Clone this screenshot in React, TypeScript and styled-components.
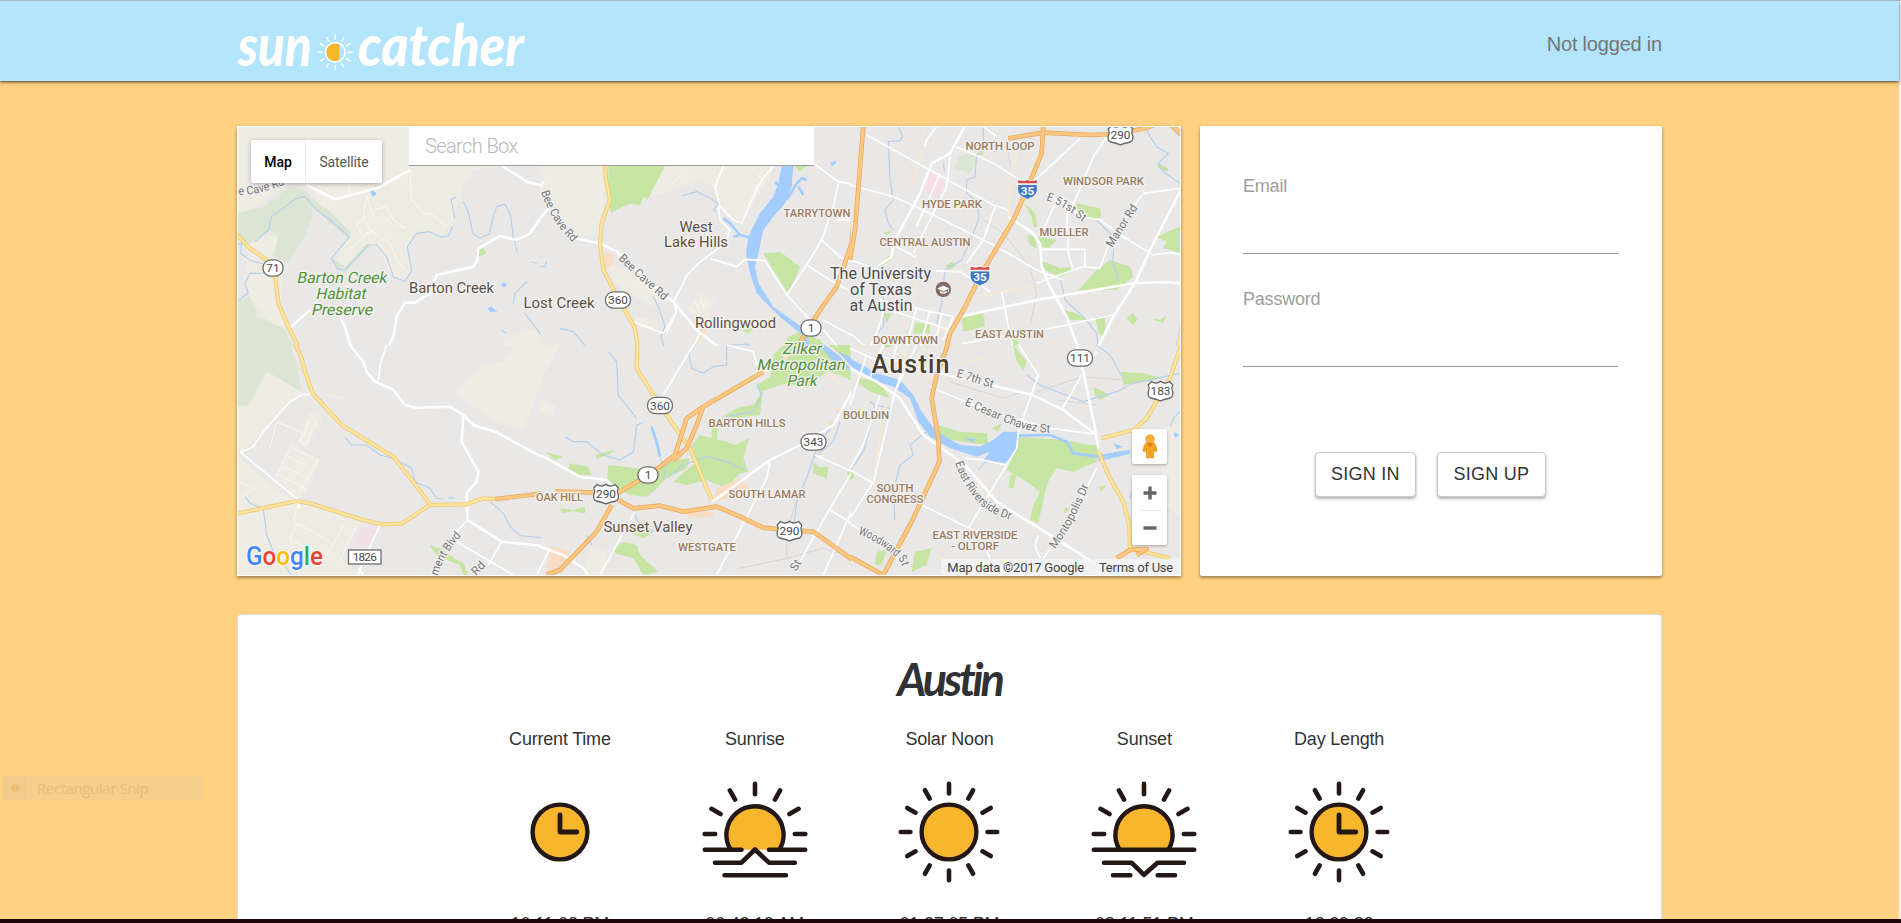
import React from "react";
import styled, { createGlobalStyle, css } from "styled-components";

const GlobalStyle = createGlobalStyle`
  *, *::before, *::after { box-sizing: border-box; }
  body {
    margin: 0;
    background: #ffd180;
    font-family: "Liberation Sans", Arial, sans-serif;
    overflow: hidden;
  }
`;

const SANS = `"Liberation Sans", Arial, sans-serif`;
const ROBOTO = `Roboto, "Liberation Sans", sans-serif`;

/* ---------- page frame ---------- */

const Frame = styled.div`
  position: relative;
  display: flex;
  flex-direction: column;
  height: 923px;
  overflow: hidden;
  border-top: 1px solid #a3b9c5;
  border-bottom: 4px solid #1e060b;
  background: #ffd180;
`;

const Page = styled.div`
  display: flex;
  flex-direction: column;
  flex: 1;
  min-height: 0;
  margin-right: 2px;
  box-shadow: 2px 0 0 #eceff3;
`;

const Container = styled.div`
  width: 1425px;
  margin-left: 237px;
`;

const Header = styled.header`
  flex: none;
  height: 80px;
  background: #b3e5fc;
  box-shadow: 0 1px 2px rgba(0, 0, 0, 0.55), 0 2px 5px rgba(0, 0, 0, 0.2);
`;

const HeaderInner = styled(Container)`
  display: flex;
  justify-content: space-between;
  height: 80px;
`;

const LogoSvg = styled.svg`
  display: block;
  width: 300px;
  height: 80px;
  overflow: visible;
`;

const LoginState = styled.span`
  line-height: 24px;
  padding-top: 31px;
  font-size: 20px;
  letter-spacing: -0.2px;
  color: #757575;
`;

const Main = styled(Container)`
  display: flex;
  flex-direction: column;
  gap: 38px;
  padding-top: 45px;
`;

const TopRow = styled.div`
  display: grid;
  grid-template-columns: 944px 462px;
  gap: 19px;
  height: 450px;
`;

const cardShadow = css`
  box-shadow: 0 2px 3px rgba(0, 0, 0, 0.3), 0 1px 4px rgba(0, 0, 0, 0.14);
`;

/* ---------- map ---------- */

const MapCard = styled.section`
  position: relative;
  border: 1px solid #fff;
  background: #e9e8e7;
  font-family: ${ROBOTO};
  ${cardShadow}
`;

const MapSvg = styled.svg`
  display: block;
  width: 942px;
  height: 448px;
  font-family: ${ROBOTO};
`;

const MapTypeSwitch = styled.div`
  position: absolute;
  left: 13px;
  top: 13px;
  display: flex;
  height: 43px;
  border-radius: 2px;
  background: #fff;
  box-shadow: 0 1px 4px rgba(0, 0, 0, 0.3);
`;

const MapTypeButton = styled.button<{ $active?: boolean; $width: number }>`
  width: ${(p) => p.$width}px;
  padding: 0;
  border: 0;
  border-left: ${(p) => (p.$active ? "0" : "1px solid #eeeeee")};
  background: transparent;
  font: ${(p) => (p.$active ? 500 : 400)} 14px ${ROBOTO};
  letter-spacing: -0.1px;
  color: ${(p) => (p.$active ? "#000" : "#565656")};
`;

const SearchInput = styled.input`
  position: absolute;
  left: 171px;
  top: -1px;
  width: 405px;
  height: 40px;
  padding: 1px 16px 0;
  border: 0;
  border-bottom: 1px solid #9e9e9e;
  background: #fff;
  font: 300 20px ${ROBOTO};
  letter-spacing: -0.6px;
  &::placeholder { color: #b9b9b9; opacity: 1; }
`;

const ControlStack = styled.div`
  position: absolute;
  right: 13px;
  top: 302px;
  display: flex;
  flex-direction: column;
  gap: 11px;
`;

const ControlBox = styled.div`
  display: flex;
  flex-direction: column;
  align-items: center;
  width: 35px;
  border-radius: 2px;
  background: #fff;
  box-shadow: 0 1px 3px rgba(0, 0, 0, 0.3);
`;

const ControlCell = styled.div`
  display: flex;
  align-items: center;
  justify-content: center;
  width: 22px;
  height: 35px;
  & + & { border-top: 1px solid #e6e6e6; }
`;

const Attribution = styled.div`
  position: absolute;
  right: 0;
  bottom: 0;
  display: flex;
  gap: 15px;
  height: 16px;
  padding: 0 7px 0 6px;
  background: rgba(245, 245, 245, 0.78);
  font-size: 13px;
  letter-spacing: -0.24px;
  line-height: 17px;
  color: #444;
  white-space: nowrap;
`;

/* Each map tile is drawn in its own grid, three units to the pixel. */
type Layer =
  | "beige" | "park" | "green" | "peach" | "river" | "stream" | "inlet" | "rail"
  | "minor" | "avenue" | "street" | "road" | "yellow" | "orange";
type Tile = { x: number; y: number; w: number; h: number; layers: Partial<Record<Layer, string[]>> };

const TILES: Tile[] = [
  {
    x: 230, y: 120, w: 930, h: 675,
    layers: {
      beige: [
        "M20,20 960,20 960,130 820,140 730,150 700,200 690,240 670,300 640,350 560,330 530,380 540,460 510,485 480,460 440,375 400,380 350,450 310,410 360,340 300,290 230,200 180,190 60,270 20,280Z",
        "M60,375 110,345 145,350 130,400 160,470 150,560 170,620 120,610 60,530 40,480Z",
        "M820,660 900,625 960,640 960,700 820,700Z",
      ],
      park: [
        "M20,280 100,260 180,200 230,215 250,240 245,290 225,350 190,400 175,430 130,410 145,350 120,330 60,370 20,340Z",
        "M20,540 60,530 80,590 160,625 205,700 20,700Z",
        "M240,235 300,275 365,340 350,352 290,300 250,262Z",
        "M308,415 345,440 410,370 420,378 350,455 318,450Z",
      ],
      green: ["M735,400 760,383 770,400 745,410Z"],
      stream: [
        "M75,365 115,330 125,290 200,235 225,230 260,270 300,300 358,350 305,415 320,445 345,450 415,375 440,375 470,410 490,470 525,485 545,450 532,380 560,340 600,335 630,350 655,348 668,320",
        "M660,240 678,232 M664,240 674,295",
        "M700,245 716,280 728,340 748,355 778,342 790,290 800,260 825,253 842,285 850,350 862,398",
        "M892,483 855,520 850,550", "M885,580 915,620 940,655 960,650",
        "M22,372 35,370 32,400 60,420 110,435", "M110,460 60,460 45,490 55,520 25,540",
        "M812,630 830,640", "M905,425 920,430 M930,410 950,405",
      ],
      river: ["M420,215 430,210 440,222 428,230Z", "M815,488 830,488 828,500 815,498Z", "M772,565 785,560 802,575 780,576Z"],
      minor: [
        "M410,230 400,290 420,330 480,370 500,420 525,450", "M430,270 470,260 490,300 525,325 490,315 455,290",
        "M540,150 545,240 580,280 610,285 650,320", "M410,290 380,310 395,345 430,330 360,385", "M355,180 358,225", "M410,230 430,290",
      ],
      road: [
        "M230,195 315,238 440,205 540,150", "M820,140 890,185 930,195 960,210",
        "M960,265 920,310 900,340 860,360 810,348 745,385 742,420 730,440 620,465 600,520 555,548 525,548 500,590 490,650 465,700",
        "M178,625 240,570", "M325,580 345,620 368,700",
      ],
      yellow: ["M12,335 60,385 110,420 135,460 145,550 175,620 215,700"],
    },
  },
  {
    x: 540, y: 120, w: 930, h: 675,
    layers: {
      beige: [
        "M0,18 200,18 200,138 190,260 175,340 120,350 60,290 0,200Z",
        "M370,140 700,140 690,170 650,230 620,290 590,300 540,260 520,200 480,180 380,215 330,230Z",
        "M200,430 300,470 370,530 340,560 250,510 210,470Z", "M440,570 480,515 530,540 500,600Z",
        "M280,590 350,600 340,640 300,620Z",
      ],
      green: [
        "M205,138 375,138 322,240 312,228 300,255 270,250 212,280 205,220Z",
        "M670,400 720,395 780,440 745,520 700,450Z", "M720,700 745,650 780,635 840,660 870,700Z",
        "M605,630 640,625 625,640Z", "M762,138 800,138 780,155Z",
      ],
      peach: ["M195,400 222,405 215,440 190,448Z", "M470,670 500,640 490,600 478,640Z"],
      river: [
        "M725,138 760,138 755,200 735,250 700,290 670,330 655,400 645,440 655,490 700,560 790,625 820,700 800,700 780,640 720,590 650,520 630,460 618,400 625,350 640,320 660,280 700,230 715,190Z",
        "M870,128 885,122 890,130 875,138Z",
      ],
      inlet: ["M740,240 770,190 785,175 800,180 M775,200 790,225", "M625,352 600,345 570,310 550,295 M600,345 580,350", "M722,220 718,200 705,185"],
      stream: [
        "M425,228 470,215 510,235 535,250 520,270 530,275", "M340,530 355,560 375,620 362,650 380,700",
        "M60,625 100,635 130,670 140,690", "M540,690 570,675 620,672 645,685", "M0,440 15,440 20,425",
      ],
      minor: ["M450,560 460,580 M465,545 480,575 M480,535 495,570 M495,540 505,565", "M640,150 670,180 640,210 M430,160 400,190"],
      street: [
        "M400,545 410,575 370,640 280,605", "M410,575 380,640", "M400,545 430,490 440,465 475,430 555,370 570,330 540,300 535,260",
        "M510,415 590,440 615,418 675,422 740,525 830,620", "M740,525 800,435 845,360 880,260 895,190",
        "M820,130 895,185 945,195", "M890,300 935,300",
        "M550,140 525,200 540,260 580,300 605,310 635,240 665,180 700,140", "M845,360 900,410 960,440", "M800,435 870,480 960,530",
        "M850,600 960,660", "M850,630 910,700", "M480,640 455,690",
      ],
      road: ["M0,200 12,185", "M0,295 30,260", "M100,355 180,370 230,395 380,530 400,545 470,630 560,700"],
      yellow: ["M195,138 198,180 210,240 185,310 180,370 190,450 240,545 285,625 295,700"],
      orange: ["M960,18 945,230 935,370 890,500 840,570 790,650 765,700"],
    },
  },
  {
    x: 850, y: 120, w: 1000, h: 675,
    layers: {
      park: ["M325,110 370,95 385,115 360,160 315,145Z"],
      green: [
        "M680,250 750,265 755,290 730,300 680,275Z", "M685,510 740,450 780,420 840,440 850,470 800,510Z",
        "M920,350 1000,315 1000,400 940,385 950,365Z", "M335,590 400,580 405,620 340,635Z", "M195,610 240,610 240,640 190,640Z",
        "M570,420 630,445 660,440 665,455 630,470 585,450Z", "M520,245 555,280 562,322 550,322 545,290Z", "M530,345 555,350 560,385 540,375Z",
        "M640,570 680,580 710,600 660,600Z", "M735,590 765,595 765,650 745,640Z", "M830,595 850,580 862,600 848,615Z",
        "M910,595 930,600 950,585 940,608 915,602Z", "M85,430 125,402 132,412 85,445Z", "M100,580 125,580 110,610Z", "M480,655 500,660 520,700 490,700Z",
        "M565,350 620,360 595,385 568,378Z", "M285,440 305,425 320,435 300,450Z", "M100,340 122,330 118,345Z", "M920,130 955,145 950,155 925,145Z", "M375,105 400,90 400,105Z",
      ],
      stream: [
        "M145,20 158,50 150,62 115,65 120,180 130,240 105,270 115,310 130,330", "M400,25 400,70 380,110 375,170 350,180 350,220 380,245 388,290 370,340 335,420 285,450 275,550 260,610",
        "M888,20 900,50 920,80 955,100 925,130 940,155 990,190", "M740,300 775,335 792,360 788,430 805,470 800,485",
        "M630,470 645,540 700,590 740,640 745,690", "M80,440 90,500 105,550 100,620 80,640", "M280,130 283,155",
      ],
      rail: ["M400,300 460,340 540,440 560,520 540,620", "M475,80 480,140"],
      avenue: [
        "M220,20 220,80 190,190", "M500,110 482,170 475,300", "M190,400 200,430 195,540 150,640", "M380,530 560,495", "M505,60 500,110",
      ],
      street: [
        "M50,45 240,150 430,255 475,270", "M260,20 230,60 225,80", "M320,80 430,130 510,180",
        "M590,220 700,290 750,300 820,350 910,405 960,398 1000,405", "M0,195 130,230 200,260 440,380 560,450 640,480",
        "M570,388 705,388 705,440", "M650,280 655,400 668,445",
        "M560,490 670,450 700,440 750,445 770,390 800,330 880,220 990,205",
        "M340,670 600,625 790,585", "M690,55 545,190", "M770,50 730,110 680,230 650,290", "M620,240 580,330",
        "M435,260 400,360 350,430", "M200,450 330,455 420,515", "M455,515 475,620 490,690", "M90,540 310,590",
        "M110,545 80,640 50,700", "M200,560 165,700", "M240,570 205,700", "M275,580 250,700", "M310,590 280,660",
        "M130,375 195,410", "M0,420 120,460", "M270,160 200,320", "M120,570 300,630", "M0,640 60,690", "M400,20 440,50",
        "M300,110 290,200 190,400",
      ],
      road: [
        "M345,18 300,100 245,130 210,220 130,370 125,410 80,440", "M475,290 550,340 570,370 575,440 600,500 650,590 690,700",
        "M330,590 560,540 850,490 950,486 1000,492", "M995,205 900,390 860,480 790,590 735,700",
      ],
      yellow: ["M995,620 980,700"],
      orange: [
        "M40,18 15,330 0,420", "M580,18 575,100 530,210 490,300 395,460 340,570 300,640 285,700",
        "M475,55 580,38 720,45 800,42 885,25 920,12", "M960,12 1000,50",
      ],
    },
  },
  {
    x: 230, y: 345, w: 930, h: 700,
    layers: {
      beige: [
        "M110,80 220,145 180,170 100,260 35,320 20,320 20,180 60,180Z",
        "M20,330 120,420 200,470 250,480 380,530 380,560 330,640 400,690 20,690Z",
        "M190,300 270,345 230,440 200,465 130,410Z", "M240,200 280,215 230,310 205,290Z", "M270,145 350,155 340,165Z",
        "M670,145 730,85 760,60 820,50 850,0 960,0 940,100 880,255 800,230Z",
      ],
      park: ["M20,0 180,0 200,60 215,140 110,78 55,180 20,185Z"],
      green: ["M940,330 960,315 960,345Z", "M600,600 640,615 680,645 700,655 715,690 700,690 690,660 640,640 610,620Z", "M930,480 960,490 960,505Z"],
      stream: [
        "M345,278 365,300 410,300 450,330 490,340 545,370 555,410 600,430 620,460 640,462 M655,458 675,460",
        "M45,455 60,475 100,490 110,570 130,620 185,690", "M780,470 820,505 840,545 870,572 955,580", "M436,105 440,110",
      ],
      minor: [
        "M245,215 210,290 225,300 260,230Z", "M185,300 135,400", "M190,310 265,345 210,440", "M175,335 250,375", "M160,365 235,400",
        "M145,390 225,430", "M205,470 190,530 230,550 300,590", "M380,540 330,650", "M200,540 180,585 260,620", "M340,540 290,630",
        "M25,410 75,430 40,450", "M120,310 140,230 230,270",
      ],
      street: [
        "M470,0 450,60 445,110", "M712,525 680,560", "M815,590 775,660", "M680,590 850,690", "M960,610 920,690",
        "M248,145 215,150 180,170 100,260 70,305 32,322 205,465 208,490", "M450,540 395,660 385,690", "M385,670 400,690",
      ],
      road: [
        "M360,0 400,50 410,80 435,110 490,135 525,180 555,188 660,185 700,210 730,240 800,262 960,350",
        "M700,215 695,290 745,380 740,410 710,445 712,525 815,590 960,605",
      ],
      yellow: [
        "M190,-15 215,40 225,80 248,145 335,240 490,335 545,405 600,478",
        "M15,507 200,468 240,475 400,525 455,538 515,536 600,480 710,478 760,460 800,462",
      ],
      orange: ["M795,462 900,450 945,443"],
    },
  },
  {
    x: 540, y: 345, w: 930, h: 700,
    layers: {
      beige: ["M0,0 60,0 0,110Z", "M0,160 50,185 40,215 0,200Z", "M150,600 200,620 190,690 130,690Z"],
      green: [
        "M700,30 730,0 960,0 960,120 900,90 860,80 800,130 740,115 660,140 650,120 690,95Z",
        "M545,215 600,185 640,180 665,140 650,120 670,130 660,210 580,220Z",
        "M455,300 480,270 560,290 585,300 628,280 610,340 625,380 600,385 560,430 500,405 440,420 400,410 470,350Z", "M515,235 532,245 532,300 515,290Z",
        "M205,360 290,370 350,370 400,345 450,340 440,370 380,400 340,440 320,455 270,450 200,410Z",
        "M90,355 145,365 155,390 110,390 85,370Z", "M15,320 70,335 45,345Z", "M820,350 835,365 865,365 860,400 820,385Z",
        "M920,380 945,385 930,405Z", "M225,610 250,590 290,600 300,630 355,680 310,690 280,640 225,625Z", "M165,330 220,315 215,325 170,342Z",
        "M60,490 100,495 135,485 135,505 100,498 65,505Z", "M300,530 340,560 310,580 285,570Z",
      ],
      peach: ["M530,430 600,400 625,425 550,465 520,460Z", "M30,600 90,620 70,680 20,690Z", "M430,500 520,500 520,515 450,520Z", "M885,185 908,200 895,220Z", "M720,30 750,30 740,45Z", "M860,235 880,225 880,250Z"],
      river: ["M830,-10 960,50 960,95 870,40Z"],
      inlet: ["M335,245 352,300 360,335"],
      stream: [
        "M75,275 100,290 140,290 190,330 240,345 280,320 290,240 310,232", "M205,20 230,50 235,150 290,220", "M360,340 375,380 370,405",
        "M445,20 455,70 490,85 520,65 560,60 560,0", "M650,120 665,150 640,200 560,215", "M380,400 430,360 500,335 560,350 620,375",
        "M890,220 830,310 800,400 770,470 760,560", "M900,230 880,290 820,340", "M140,570 155,600", "M280,500 300,540 340,560",
      ],
      rail: ["M740,640 740,560 770,460 800,430", "M600,670 740,640 850,610 900,625 960,670"],
      avenue: ["M850,60 890,110 960,140", "M960,100 900,30 860,0"],
      street: [
        "M460,0 370,150", "M560,0 640,20 650,60", "M690,350 680,400 530,690", "M825,330 960,390", "M960,340 870,490 780,650",
        "M870,495 960,550", "M960,440 850,690", "M285,500 180,690", "M30,610 0,670",
      ],
      road: ["M0,330 120,395 200,405 235,440", "M0,605 70,630 130,670 145,690", "M515,470 560,440 690,345 780,300 880,240 930,150 975,0"],
      yellow: ["M292,-10 290,70 340,150 380,210 435,290 450,310 515,465"],
      orange: [
        "M670,80 490,185 440,220 405,330 360,365 300,405 240,440 215,455", "M490,185 470,240 440,310 400,345",
        "M45,440 160,442", "M215,480 170,560 60,675 20,690", "M235,465 280,490 360,482 430,500 530,485 600,515 670,548 740,555 820,560 960,660",
      ],
    },
  },
  {
    x: 850, y: 345, w: 1000, h: 700,
    layers: {
      beige: ["M930,250 1000,230 1000,520 940,480Z"],
      park: ["M480,340 540,315 600,370 560,400 510,385Z"],
      green: [
        "M265,240 330,260 410,265 415,300 340,290 270,280Z",
        "M510,275 640,285 720,300 745,300 740,350 670,380 620,370 600,400 590,420 565,535 540,525 550,480 570,440 530,410 470,375 490,330Z",
        "M480,390 500,385 490,430 475,430Z", "M815,80 880,85 940,100 820,120Z", "M730,125 780,150 750,165 735,150Z",
        "M195,620 245,610 230,660 185,680Z", "M80,620 110,615 95,660 75,660Z", "M30,100 90,110 120,160 60,140 20,110Z",
        "M490,0 530,50 520,75 500,50Z", "M745,425 770,420 755,440Z", "M640,490 660,490 645,505Z", "M425,250 455,235 445,260Z", "M100,0 130,0 110,10Z", "M0,375 15,395 0,405Z",
      ],
      river: [
        "M0,40 80,85 150,105 190,150 215,200 260,260 330,300 390,305 430,285 460,260 505,260 510,275 495,320 465,355 400,345 420,320 380,335 300,310 240,275 205,230 180,160 130,125 70,105 0,62Z",
        "M790,295 820,305 800,312Z", "M970,262 990,268 975,280Z", "M345,280 380,282 365,292Z",
      ],
      inlet: ["M500,272 600,270 650,290 670,325 740,335 840,318", "M745,345 840,322"],
      stream: [
        "M530,90 570,120 700,170 800,140 850,115 990,85", "M740,0 780,30 820,100", "M60,170 75,180 60,250 40,320 0,380", "M75,180 120,190 110,250",
        "M230,260 180,300 190,330 150,360 130,440 135,525", "M1000,190 970,220 960,245", "M385,375 420,335", "M845,440 840,460",
      ],
      rail: ["M300,110 460,160 520,140 560,150", "M560,140 700,95 820,105", "M620,165 740,180"],
      avenue: ["M170,0 160,80 130,150", "M220,0 200,110", "M250,50 240,120", "M320,60 400,40", "M390,390 395,450", "M80,40 250,100", "M110,170 70,410"],
      street: [
        "M345,340 400,345 465,360", "M505,260 500,310 355,550", "M500,-10 565,90 505,260", "M240,125 420,200 600,250 740,268",
        "M695,90 635,195", "M740,370 650,540 580,640", "M565,570 555,600 570,640", "M70,415 0,375", "M160,60 130,160 70,415",
        "M0,370 40,300 90,150", "M70,410 0,520", "M215,480 380,560 420,640", "M740,20 710,60", "M0,535 100,600 160,660",
        "M50,30 0,180", "M200,0 140,130", "M100,0 80,40 60,100", "M0,10 90,50", "M80,30 250,80", "M140,0 120,80",
      ],
      road: [
        "M0,70 80,110 150,160 220,270 345,360 440,470 560,545 750,665", "M270,85 550,150 640,195 740,270", "M678,-10 700,80 735,250 745,310",
      ],
      yellow: ["M1000,-20 960,100 890,220 850,255 755,280", "M745,320 780,400 820,470 838,540 840,610", "M840,610 960,640"],
      orange: ["M300,-20 260,90 245,160 265,280 268,350 190,520 100,690", "M0,635 100,690", "M800,640 840,615 890,612 860,630"],
    },
  },
];

const FILLS: [Layer, string][] = [
  ["beige", "#efece3"], ["park", "#dae5d3"], ["green", "#c6e4a2"], ["peach", "#f6ddc4"], ["river", "#a3ccff"],
];
const LINES: [Layer, string, number][] = [
  ["inlet", "#a3ccff", 8], ["stream", "#b4cfec", 3.4], ["rail", "#d6d5d3", 3], ["minor", "#f9f8f4", 3],
  ["avenue", "#f9e9d2", 5], ["street", "#ffffff", 5], ["road", "#ffffff", 7.5],
  ["yellow", "#ecc777", 12.5], ["yellow", "#fde49b", 8],
  ["orange", "#e8ab60", 14], ["orange", "#fdc780", 9],
];

type LabelKind = "town" | "area" | "park" | "campus" | "city";
const LABEL_STYLE: Record<LabelKind, { size: number; fill: string; weight: number; slanted?: boolean }> = {
  town: { size: 14.8, fill: "#5d5145", weight: 400 },
  area: { size: 11.5, fill: "#9a7b60", weight: 500 },
  park: { size: 15.6, fill: "#4f8f3a", weight: 400, slanted: true },
  campus: { size: 15.6, fill: "#4c4d52", weight: 400 },
  city: { size: 25, fill: "#463f33", weight: 500 },
};

const LABELS: [LabelKind, string, number, number, number][] = [
  ["park", "Barton Creek", 341.5, 283, 90], ["park", "Habitat", 340.5, 299, 50], ["park", "Preserve", 341.5, 315, 61],
  ["town", "Barton Creek", 451.5, 293, 85], ["town", "Lost Creek", 559, 308, 71],
  ["town", "West", 696, 232, 33], ["town", "Lake Hills", 696, 247, 64], ["town", "Rollingwood", 735.5, 328, 81],
  ["town", "Sunset Valley", 648, 532, 89],
  ["area", "TARRYTOWN", 817, 217, 67], ["area", "NORTH LOOP", 1000, 150, 69], ["area", "HYDE PARK", 952, 207.5, 60],
  ["area", "CENTRAL AUSTIN", 925, 246, 91], ["area", "WINDSOR PARK", 1103.5, 185, 81], ["area", "MUELLER", 1064, 236, 49],
  ["area", "EAST AUSTIN", 1009.5, 337.5, 69], ["area", "DOWNTOWN", 905.5, 343.5, 65], ["area", "BOULDIN", 866, 418.5, 46],
  ["area", "SOUTH", 895, 492, 37], ["area", "CONGRESS", 895, 503, 57], ["area", "EAST RIVERSIDE", 975, 539, 85],
  ["area", "- OLTORF", 975, 550, 48], ["area", "BARTON HILLS", 747, 427, 77], ["area", "SOUTH LAMAR", 767, 498, 77],
  ["area", "WESTGATE", 707, 551, 58], ["area", "OAK HILL", 559.5, 500.5, 47],
  ["campus", "The University", 880.5, 278.5, 101], ["campus", "of Texas", 881, 294.5, 62], ["campus", "at Austin", 881, 310.5, 63],
  ["park", "Zilker", 801.5, 353.5, 39], ["park", "Metropolitan", 800.5, 370, 88], ["park", "Park", 801.5, 386, 30],
  ["city", "Austin", 910.5, 372.5, 78],
];

const STREET_NAMES: { id: string; text: string; d: string; length: number }[] = [
  { id: "bee1", text: "e Cave Rd", d: "M238.5,195 Q262,195 290,182", length: 48 },
  { id: "bee2", text: "Bee Cave Rd", d: "M541,192 Q551,221 572,242 L580,250", length: 60 },
  { id: "bee3", text: "Bee Cave Rd", d: "M618,259 Q640,280 664,301 L672,308", length: 62 },
  { id: "e51", text: "E 51st St", d: "M1046,200 Q1064,206 1083,222 L1090,228", length: 43 },
  { id: "manor", text: "Manor Rd", d: "M1112,248 L1139,206", length: 48 },
  { id: "e7", text: "E 7th St", d: "M956,376.5 L995,389", length: 38 },
  { id: "cesar", text: "E Cesar Chavez St", d: "M964,405 Q994,418 1017,427 Q1034,433 1060,433", length: 91 },
  { id: "riverside", text: "East Riverside Dr", d: "M955,463 Q965,490 982,506 Q995,517 1020,522", length: 83 },
  { id: "monto", text: "Montopolis Dr", d: "M1055,549 Q1073,526 1090,483", length: 72 },
  { id: "wood", text: "Woodward St", d: "M858,534 Q880,542 899,560 Q902,563 904,574", length: 56 },
  { id: "blvd", text: "ment Blvd", d: "M438,576 Q443,556 461,536", length: 47 },
  { id: "rd", text: "Rd", d: "M476,576 L488,564", length: 14 },
  { id: "st", text: "St", d: "M796,572 L803,561", length: 11 },
];

const PILLS: [string, number, number][] = [
  ["71", 273, 268], ["360", 618, 300], ["1", 811, 328], ["360", 660, 405.5], ["1", 648, 475], ["343", 813.5, 442], ["111", 1080, 358],
];
const US_ROUTES: [string, number, number][] = [["290", 606, 494], ["290", 789.5, 531], ["290", 1120.5, 135], ["183", 1160.5, 391]];
const INTERSTATES: [number, number][] = [[1027.5, 189], [980, 275.5]];

function AustinMap() {
  return (
    <MapSvg viewBox="238 127 942 448" aria-label="Map of Austin">
      <defs>
        {TILES.map((t, i) => (
          <clipPath key={i} id={`tile${i}`}>
            <rect x="-2" y="-2" width={t.w + 4} height={t.h + 4} />
          </clipPath>
        ))}
        {STREET_NAMES.map((s) => (
          <path key={s.id} id={s.id} d={s.d} />
        ))}
      </defs>
      <rect x="238" y="127" width="942" height="448" fill="#e9e8e7" />
      {FILLS.map(([layer, fill]) =>
        TILES.map((t, i) => (
          <g key={layer + i} transform={`translate(${t.x} ${t.y}) scale(0.33333)`}>
            <g clipPath={`url(#tile${i})`}>
              <path d={(t.layers[layer] ?? []).join(" ")} fill={fill} />
            </g>
          </g>
        ))
      )}
      <path d="M932,170 945,183 936,197 922,192Z" fill="#f6dfe7" />
      <path d="M358,530 378,525 368,548 358,546Z" fill="#f3e1e8" />
      {LINES.map(([layer, stroke, width], n) =>
        TILES.map((t, i) => (
          <g key={`${n}-${i}`} transform={`translate(${t.x} ${t.y}) scale(0.33333)`}>
            <g clipPath={`url(#tile${i})`}>
              <path
                d={(t.layers[layer] ?? []).join(" ")}
                fill="none"
                stroke={stroke}
                strokeWidth={width}
                strokeLinejoin="round"
                strokeLinecap="butt"
              />
            </g>
          </g>
        ))
      )}

      <g fontSize="11.8" fill="#757575" stroke="#f3f2f1" strokeWidth="2.4" strokeLinejoin="round" paintOrder="stroke">
        {STREET_NAMES.map((s) => (
          <text key={s.id}>
            <textPath href={`#${s.id}`} textLength={s.length} lengthAdjust="spacingAndGlyphs">
              {s.text}
            </textPath>
          </text>
        ))}
      </g>

      <g stroke="#f3f2f0" strokeWidth="2.6" strokeLinejoin="round" paintOrder="stroke" textAnchor="middle">
        {LABELS.map(([kind, text, x, y, width]) => {
          const s = LABEL_STYLE[kind];
          return (
            <text
              key={text + x + y}
              transform={`translate(${x} ${y})${s.slanted ? " skewX(-12)" : ""}`}
              textLength={width}
              lengthAdjust={kind === "city" ? "spacing" : "spacingAndGlyphs"}
              fontSize={s.size}
              fontWeight={s.weight}
              fill={s.fill}
            >
              {text}
            </text>
          );
        })}
      </g>

      <g fontSize="11.8" fill="#484848" fontWeight="400" textAnchor="middle">
        {PILLS.map(([n, x, y]) => {
          const w = n.length === 3 ? 25 : 20;
          return (
            <g key={n + x}>
              <rect x={x - w / 2} y={y - 8.2} width={w} height={16.4} rx={8} fill="#fff" stroke="#6d6d6d" strokeWidth="1.3" />
              <text x={x} y={y + 4.2}>{n}</text>
            </g>
          );
        })}
        {US_ROUTES.map(([n, x, y]) => (
          <g key={n + x}>
            <path
              transform={`translate(${x} ${y})`}
              d="M-9,-9.5 Q-6,-7.5 -4,-8 Q-1.5,-8.3 0,-9.8 Q1.5,-8.3 4,-8 Q6,-7.5 9,-9.5 L12.3,-6 Q10.5,-3 12,0 Q13.5,5 10,7 Q4,8 0,9.8 Q-4,8 -10,7 Q-13.5,5 -12,0 Q-10.5,-3 -12.3,-6Z"
              fill="#fff"
              stroke="#656565"
              strokeWidth="1.3"
              strokeLinejoin="round"
            />
            <text x={x} y={y + 4.2}>{n}</text>
          </g>
        ))}
        {INTERSTATES.map(([x, y]) => (
          <g key={x} transform={`translate(${x} ${y})`}>
            <path d="M-9.5,-4.5 H9.5 Q11.5,5 5,8 Q1,9.5 0,10.5 Q-1,9.5 -5,8 Q-11.5,5 -9.5,-4.5Z" fill="#3f78c0" stroke="#fff" strokeWidth="0.8" />
            <path d="M-9.5,-9.5 Q-4,-7 0,-9.3 Q4,-7 9.5,-9.5 L10,-5.3 H-10Z" fill="#d54545" stroke="#fff" strokeWidth="0.8" />
            <text y="5.6" fill="#fff" fontWeight="700">35</text>
          </g>
        ))}
        <rect x="348.5" y="550" width="32.5" height="14" fill="#fff" stroke="#6d6d6d" strokeWidth="1.3" />
        <text x="364.8" y="561.3" textLength="24">1826</text>
      </g>

      <g transform="translate(943.3 289.4)">
        <circle r="8.2" fill="#816b63" stroke="#fff" strokeWidth="0.8" />
        <path d="M-6,-1 0,-4 6,-1 0,2Z M-3.4,1.4 0,3.2 3.4,1.4 V3.4 Q0,5.5 -3.4,3.4Z M4.8,-0.5 H5.6 V3 H4.8Z" fill="#fff" />
      </g>

      <text
        x="246" y="565" textLength="77" lengthAdjust="spacingAndGlyphs" fontSize="25" fontWeight="500"
        stroke="#fff" strokeWidth="1.6" paintOrder="stroke"
      >
        <tspan fill="#4285f4">G</tspan>
        <tspan fill="#ea4335">o</tspan>
        <tspan fill="#fbbc05">o</tspan>
        <tspan fill="#4285f4">g</tspan>
        <tspan fill="#34a853">l</tspan>
        <tspan fill="#ea4335">e</tspan>
      </text>
    </MapSvg>
  );
}

function Pegman() {
  return (
    <svg width="16" height="26" viewBox="0 0 16 26">
      <path d="M4,9 H12 Q14,10 15,17 L13.2,17.8 11.8,14.5 11.4,24 H8.7 L8,18 7.3,24 H4.6 L4.2,14.5 2.8,17.8 1,17 Q2,10 4,9Z" fill="#f5a623" stroke="#d98b12" strokeWidth="0.7" />
      <path d="M5,9 8,13.5 11,9Z" fill="#e07f16" />
      <circle cx="8" cy="5" r="4.1" fill="#f7b12f" stroke="#d98b12" strokeWidth="0.7" />
    </svg>
  );
}

function ZoomGlyph({ plus }: { plus?: boolean }) {
  return (
    <svg width="14" height="14" viewBox="0 0 14 14">
      <path d={plus ? "M0.5,7 H13.5 M7,0.5 V13.5" : "M0.5,7 H13.5"} stroke="#666" strokeWidth="3.4" />
    </svg>
  );
}

/* ---------- sign-in form ---------- */

const LoginCard = styled.form`
  display: flex;
  flex-direction: column;
  padding: 48px 44px 0 43px;
  border-radius: 2px;
  background: #fff;
  ${cardShadow}
`;

const Field = styled.label`
  display: flex;
  flex-direction: column;
  height: 113px;
  font-size: 18px;
  line-height: 24px;
  letter-spacing: -0.2px;
  color: #9e9e9e;
`;

const FieldInput = styled.input`
  width: 375px;
  height: 56px;
  padding: 0;
  border: 0;
  border-bottom: 1px solid #949494;
  background: transparent;
  font: 18px ${SANS};
`;

const ButtonRow = styled.div`
  display: flex;
  justify-content: center;
  gap: 21px;
  margin: 52px 0 0 0;
`;

const FormButton = styled.button<{ $width: number }>`
  width: ${(p) => p.$width}px;
  height: 45px;
  padding: 0 0 1px;
  border: 1px solid #c9c9c9;
  border-radius: 4px;
  background: #fff;
  box-shadow: 0 2px 3px rgba(0, 0, 0, 0.3);
  font: 18px ${SANS};
  letter-spacing: 0.25px;
  white-space: nowrap;
  color: #333;
`;

/* ---------- sun times ---------- */

const TimesCard = styled.section`
  display: flex;
  flex-direction: column;
  align-items: center;
  width: 1425px;
  height: 340px;
  padding-top: 35px;
  border: 1px solid #dcdcdc;
  border-radius: 4px;
  background: #fff;
`;

const CityTitle = styled.h2`
  margin: 0 0 17px;
  font: italic 700 45px/58px Lato, ${SANS};
  height: 60px;
  letter-spacing: -3.1px;
  color: #2f3234;
`;

const TimesGrid = styled.div`
  display: grid;
  grid-template-columns: repeat(5, 194.8px);
`;

const TimeColumn = styled.div`
  display: flex;
  flex-direction: column;
  align-items: center;
  font-size: 18px;
  line-height: 24px;
  letter-spacing: -0.2px;
  color: #333;
`;

const SunSvg = styled.svg`
  display: block;
  width: 110px;
  height: 110px;
  margin: 26px 0 25px;
`;

const INK = "#231815";
const SUN = "#f8b62d";

type Phase = "clock" | "rise" | "noon" | "set" | "length";

function rays(from: number, to: number, cy: number, degrees: number[]) {
  return degrees
    .map((deg) => {
      const a = (deg * Math.PI) / 180;
      const p = (r: number) => `${(r * Math.cos(a)).toFixed(2)},${(cy - r * Math.sin(a)).toFixed(2)}`;
      return `M${p(from)} L${p(to)}`;
    })
    .join(" ");
}

const ALL_ROUND = Array.from({ length: 12 }, (_, i) => i * 30);
const UPPER_HALF = [0, 30, 60, 90, 120, 150, 180];

function SunIcon({ phase }: { phase: Phase }) {
  const horizon = phase === "rise" || phase === "set";
  return (
    <SunSvg viewBox="-55 -55 110 110">
      <g fill="none" stroke={INK} strokeWidth="4.6" strokeLinecap="round" strokeLinejoin="round">
        {horizon ? (
          <path d="M-24.4,17.7 A28.6,28.6 0 1 1 24.4,17.7" fill={SUN} strokeWidth="4.4" strokeLinecap="butt" />
        ) : (
          <circle r="27.4" fill={SUN} strokeWidth="4.4" />
        )}
        {(phase === "noon" || phase === "length") && <path d={rays(38.6, 48.2, 0, ALL_ROUND)} />}
        {(phase === "clock" || phase === "length") && <path d="M0,-17 V0 H16.8" strokeWidth="4.8" />}
        {horizon && <path d={rays(39.8, 50.3, 2, UPPER_HALF)} />}
        {phase === "rise" && (
          <path d="M-50.2,17.7 H-13.5 M14,17.7 H50.2 M-40,30.7 H-13.5 L0,17.5 L14,30.7 H39.8 M-30.5,43.3 H31" />
        )}
        {phase === "set" && (
          <path d="M-50.2,17.7 H50.2 M-40,30.7 H-12.5 L0,42.8 L13.5,30.7 H40 M-31,43.3 H-13.7 M13.7,43.3 H31" />
        )}
      </g>
    </SunSvg>
  );
}

const TIMES: { label: string; phase: Phase; value: string }[] = [
  { label: "Current Time", phase: "clock", value: "10:11:02 PM" },
  { label: "Sunrise", phase: "rise", value: "06:42:19 AM" },
  { label: "Solar Noon", phase: "noon", value: "01:27:05 PM" },
  { label: "Sunset", phase: "set", value: "08:11:51 PM" },
  { label: "Day Length", phase: "length", value: "13:29:32" },
];

/* ---------- faded menu item over the page ---------- */

const SnipMenuItem = styled.div`
  position: absolute;
  left: 3px;
  top: 775px;
  display: flex;
  align-items: center;
  width: 201px;
  height: 24px;
  background: #f6cf8b;
  font: 15px "Open Sans", "Noto Sans", sans-serif;
  letter-spacing: -0.4px;
  color: #e6bd7b;
`;

const SnipMark = styled.span`
  display: flex;
  align-items: center;
  justify-content: center;
  width: 24px;
  height: 24px;
  margin-right: 10px;
  background: #f1cb8a;
  &::before {
    content: "";
    width: 8px;
    height: 8px;
    border-radius: 50%;
    background: #ecbd77;
  }
`;

function Logo() {
  return (
    <LogoSvg viewBox="237 1 300 80" role="img" aria-label="sun catcher">
      <g fill="#fff" fontFamily="Lato, sans-serif" fontStyle="italic" fontWeight="900" fontSize="57">
        <text x="238" y="66" textLength="74" lengthAdjust="spacingAndGlyphs">sun</text>
        <text x="358" y="66" textLength="166" lengthAdjust="spacingAndGlyphs">catcher</text>
      </g>
      <g transform="translate(335.2 52.3)">
        <path d="M4,-8 A9,9 0 1 0 4,8Z" fill="#f8b62d" />
        <circle r="9.8" fill="none" stroke="#fff" strokeWidth="1.5" />
        <path d={rays(13, 17.2, 0, ALL_ROUND)} fill="none" stroke="#fff" strokeWidth="1.5" strokeLinecap="round" />
      </g>
    </LogoSvg>
  );
}

export default function App() {
  return (
    <Frame>
      <GlobalStyle />
      <Page>
        <Header>
          <HeaderInner>
            <Logo />
            <LoginState>Not logged in</LoginState>
          </HeaderInner>
        </Header>
        <Main>
          <TopRow>
            <MapCard>
              <AustinMap />
              <MapTypeSwitch>
                <MapTypeButton $active $width={54}>Map</MapTypeButton>
                <MapTypeButton $width={77}>Satellite</MapTypeButton>
              </MapTypeSwitch>
              <SearchInput placeholder="Search Box" />
              <ControlStack>
                <ControlBox>
                  <ControlCell><Pegman /></ControlCell>
                </ControlBox>
                <ControlBox>
                  <ControlCell><ZoomGlyph plus /></ControlCell>
                  <ControlCell><ZoomGlyph /></ControlCell>
                </ControlBox>
              </ControlStack>
              <Attribution>
                <span>Map data ©2017 Google</span>
                <span>Terms of Use</span>
              </Attribution>
            </MapCard>
            <LoginCard>
              <Field>
                Email
                <FieldInput type="email" />
              </Field>
              <Field>
                Password
                <FieldInput type="password" />
              </Field>
              <ButtonRow>
                <FormButton type="button" $width={101}>SIGN IN</FormButton>
                <FormButton type="button" $width={109}>SIGN UP</FormButton>
              </ButtonRow>
            </LoginCard>
          </TopRow>
          <TimesCard>
            <CityTitle>Austin</CityTitle>
            <TimesGrid>
              {TIMES.map((t) => (
                <TimeColumn key={t.label}>
                  <span>{t.label}</span>
                  <SunIcon phase={t.phase} />
                  <span>{t.value}</span>
                </TimeColumn>
              ))}
            </TimesGrid>
          </TimesCard>
        </Main>
      </Page>
      <SnipMenuItem>
        <SnipMark />
        Rectangular Snip
      </SnipMenuItem>
    </Frame>
  );
}
